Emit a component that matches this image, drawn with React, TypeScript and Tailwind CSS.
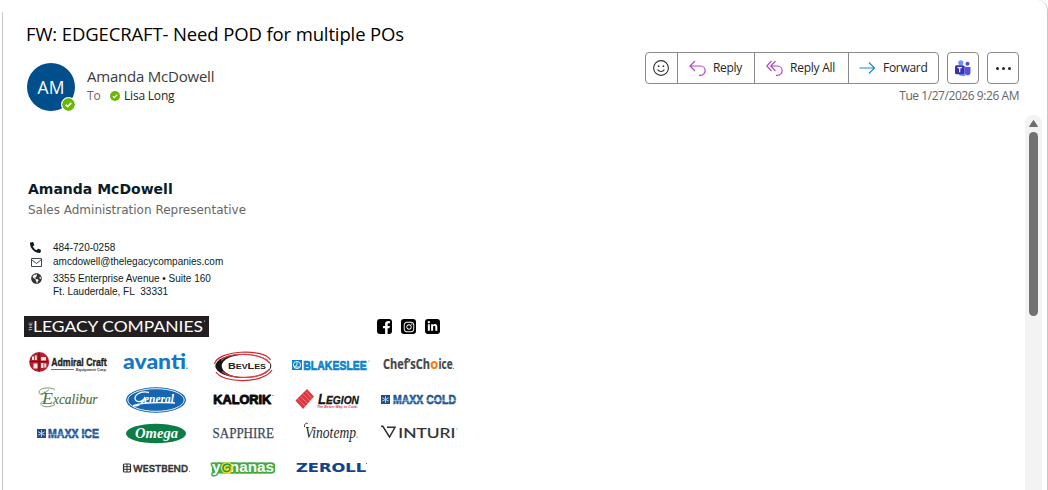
import React from 'react';
import { FaFacebookF, FaInstagram, FaLinkedinIn, FaPhoneAlt, FaGlobeAmericas } from 'react-icons/fa';

interface WordProps {
    x: number;
    y: number;
    w: number;
    size: number;
    fill: string;
    font?: string;
    weight?: number;
    italic?: boolean;
    heavy?: number;
    children: React.ReactNode;
}

// One stretched line of logo lettering; "heavy" thickens it with a stroke
function Word({ x, y, w, size, fill, font = 'Liberation Sans, sans-serif', weight = 400, italic, heavy = 0, children }: WordProps) {
    return (
        <text
            x={x}
            y={y}
            textLength={w}
            lengthAdjust="spacingAndGlyphs"
            fontSize={size}
            fontFamily={font}
            fontWeight={weight}
            fontStyle={italic ? 'italic' : 'normal'}
            fill={fill}
            stroke={heavy ? fill : 'none'}
            strokeWidth={heavy}
            strokeLinejoin="round"
        >
            {children}
        </text>
    );
}

function Logo({ className = '', label, children }: { className?: string; label: string; children: React.ReactNode }) {
    return (
        <svg viewBox="0 0 88 35" width="88" height="35" aria-label={label} className={`overflow-visible ${className}`}>
            {children}
        </svg>
    );
}

function Snowflake({ x, y }: { x: number; y: number }) {
    return (
        <g transform={`translate(${x} ${y})`}>
            <rect width="9" height="9" fill="#1d4f8c" />
            <path d="M4.5 1v7M1.2 2.8l6.6 3.4M1.2 6.2l6.6-3.4" stroke="#c9dcf0" strokeWidth="0.9" />
        </g>
    );
}

function PresenceBadge({ className }: { className: string }) {
    return (
        <svg viewBox="0 0 12 12" className={className}>
            <circle cx="6" cy="6" r="6" fill="#6bb700" />
            <path d="M3.4 6.2l1.8 1.8 3.4-3.5" fill="none" stroke="#fff" strokeWidth="1.5" />
        </svg>
    );
}

function BrandGrid() {
    return (
        <div className="grid w-[440px] grid-cols-5">
            <Logo label="Admiral Craft">
                <circle cx="15.2" cy="15" r="10" fill="#b51f2b" />
                <path d="M15 6v18M6 14.500h18" stroke="#6d0a14" strokeWidth="1.200" />
                <path d="M8 9.500h2v3.500H8zM10.800 8.500h2v4.500h-2zM17 10h5v3.500h-5zM9.500 16.500h4v5h-4zM17 16h2.500v5H17zM20.300 16.500h2v4h-2z" fill="#fff" opacity="0.9" />
                <Word x={27.2} y={19} w={55.500} size={11.500} weight={700} heavy={0.4} fill="#1e1e1e">Admiral Craft</Word>
                <path d="M27 22.500h23" stroke="#c8323c" strokeWidth="0.9" />
                <Word x={52} y={24.2} w={31} size={3.400} weight={700} fill="#333">Equipment Corp.</Word>
            </Logo>
            <Logo label="avanti">
                <Word x={11} y={22} w={63} size={21} weight={900} font="Lato, sans-serif" fill="#1478c8">avanti</Word>
                <circle cx="75" cy="21.200" r="0.900" fill="#5c9fd4" />
            </Logo>
            <Logo label="BevLes">
                <ellipse cx="43.300" cy="19" rx="28" ry="12" fill="#161616" />
                <ellipse cx="46" cy="19" rx="24.300" ry="11.500" fill="#fff" />
                <path d="M14.500 17C17 3.500 63 .500 70.500 13" fill="none" stroke="#d3262f" strokeWidth="1.200" />
                <path d="M16 25c7 11.500 47 12 56-2" fill="none" stroke="#d3262f" strokeWidth="1.200" />
                <path d="M21 13.500C29 5 60 5 69.500 16M22 24.500c9 8 37 8.500 47-2" fill="none" stroke="#dd3c44" strokeWidth="1.300" />
                <text x="28" y="22" textLength="38" lengthAdjust="spacingAndGlyphs" fontFamily="Liberation Sans, sans-serif" fontWeight="700" fill="#222" fontSize="7">
                    <tspan fontSize="8.500">B</tspan>EV<tspan fontSize="8.500">L</tspan>ES
                </text>
            </Logo>
            <Logo label="Blakeslee">
                <rect x="4" y="13" width="10" height="10" fill="#0a84cc" />
                <circle cx="9" cy="18" r="3.600" fill="none" stroke="#fff" strokeWidth="0.900" />
                <path d="M9 14v4l-3 2h6" fill="none" stroke="#fff" strokeWidth="0.900" />
                <Word x={15.300} y={22.800} w={63.500} size={13.500} weight={700} heavy={0.700} fill="#0a84cc">BLAKESLEE</Word>
                <circle cx="81" cy="14" r="0.600" fill="#0a84cc" />
            </Logo>
            <Logo label="Chef's Choice">
                <Word x={7} y={22} w={47} size={13.500} weight={700} font="Open Sans, sans-serif" heavy={0.200} fill="#47474a">Chef’sCh</Word>
                <Word x={54.200} y={22} w={8} size={13.500} weight={700} font="Open Sans, sans-serif" heavy={0.200} fill="#f08119">o</Word>
                <Word x={62.500} y={22} w={14} size={13.500} weight={700} font="Open Sans, sans-serif" heavy={0.200} fill="#47474a">ice</Word>
                <circle cx="77.500" cy="21.500" r="0.600" fill="#777" />
            </Logo>

            <Logo label="Excalibur">
                <Word x={29} y={21.500} w={44.500} size={14} italic font="Liberation Serif, serif" heavy={0.150} fill="#4b7042">xcalibur</Word>
                <Word x={18} y={21.500} w={11} size={17} italic font="Liberation Serif, serif" fill="#4b7042">E</Word>
                <path d="M31 7.500c-6-3-16-1.500-16 2.500 0 3.500 6 3 5.500-.5M25 7.500c-3 3-5 4-8 4M31 22.500c-5 3-12 3-14 0-1-2 2-4 4-3" fill="none" stroke="#5d8054" strokeWidth="0.800" />
            </Logo>
            <Logo label="General">
                <ellipse cx="44" cy="18" rx="30" ry="12.800" fill="#1466b2" />
                <ellipse cx="44" cy="18" rx="28.200" ry="11.300" fill="none" stroke="#fff" strokeWidth="0.900" />
                <Word x={32} y={20.500} w={30} size={12} weight={700} italic font="Liberation Serif, serif" fill="#fff">eneral</Word>
                <path d="M37 10.500c-9-2.500-17 4-13 8 3 2.500 8 .500 9-3.500-1 5-5 9-12 9M21 23.500c12-4 28-3 42-2.500" fill="none" stroke="#fff" strokeWidth="1.300" />
            </Logo>
            <Logo label="Kalorik">
                <Word x={13.300} y={21.800} w={58} size={12.500} weight={700} heavy={0.900} fill="#080808">KALORIK</Word>
                <circle cx="73" cy="13.500" r="0.500" fill="#222" />
            </Logo>
            <Logo label="Legion">
                <path d="M7.500 18.500L19 7l7 7.500L15 27z" fill="#dc3940" />
                <path d="M10 17l7 7M12.500 14.500l7 7M15 12l7 7M17.500 9.500l6.500 7" stroke="#f19a9c" strokeWidth="0.600" />
                <Word x={30} y={21.800} w={8} size={14} weight={700} italic heavy={0.300} fill="#161616">L</Word>
                <Word x={38} y={21.800} w={33} size={11} weight={700} italic heavy={0.300} fill="#161616">EGION</Word>
                <Word x={29} y={25.800} w={41} size={3.600} weight={700} italic fill="#e03a42">The Better Way to Cook.</Word>
            </Logo>
            <Logo label="Maxx Cold">
                <Snowflake x={5} y={13} />
                <Word x={17} y={21.800} w={63} size={12} weight={700} heavy={0.600} fill="url(#frost)">MAXX COLD</Word>
            </Logo>

            <Logo label="Maxx Ice">
                <defs>
                    <linearGradient id="frost" x1="0" y1="0" x2="0" y2="1">
                        <stop offset="0.200" stopColor="#1c4f8a" />
                        <stop offset="0.500" stopColor="#2f6aa5" />
                        <stop offset="0.560" stopColor="#86b1d6" />
                        <stop offset="0.620" stopColor="#2b66a2" />
                        <stop offset="0.900" stopColor="#17457c" />
                    </linearGradient>
                </defs>
                <Snowflake x={13} y={12} />
                <Word x={24} y={20.800} w={51} size={12} weight={700} heavy={0.600} fill="url(#frost)">MAXX ICE</Word>
            </Logo>
            <Logo label="Omega">
                <ellipse cx="44" cy="16.500" rx="30" ry="9.800" fill="#0c7d45" />
                <Word x={23} y={21} w={43} size={14.500} weight={700} italic font="Liberation Serif, serif" fill="#fff">Omega</Word>
            </Logo>
            <Logo label="Sapphire">
                <Word x={12.500} y={20.500} w={61.500} size={15} font="Liberation Serif, serif" heavy={0.250} fill="#3a475c">SAPPHIRE</Word>
            </Logo>
            <Logo label="Vinotemp">
                <Word x={17} y={20.500} w={51} size={17.500} italic font="Liberation Serif, serif" fill="#26262a">Vinotemp</Word>
                <path d="M16.500 10c-.500-3 2-5 3.500-3" fill="none" stroke="#26262a" strokeWidth="0.900" />
                <circle cx="69" cy="20" r="0.500" fill="#333" />
            </Logo>
            <Logo label="Vinturi">
                <path d="M5 9.300h1.800l6.700 10.700 5.500-9.700h-8" fill="none" stroke="#2c2f33" strokeWidth="1.500" />
                <Word x={22.300} y={20.700} w={57} size={13} font="Lato, sans-serif" heavy={0.200} fill="#2c2f33">INTURI</Word>
                <circle cx="81" cy="12" r="0.500" fill="#555" />
            </Logo>

            <Logo label="West Bend" className="col-start-2">
                <rect x="11.500" y="12" width="7" height="8" rx="1" fill="none" stroke="#333" strokeWidth="1.200" />
                <path d="M15 12v8M11.500 14.700h7M11.500 17.300h7" stroke="#333" strokeWidth="1" />
                <Word x={21} y={19.700} w={55} size={9.500} font="Inter, sans-serif" weight={500} heavy={0.450} fill="#333">WESTBEND</Word>
                <circle cx="77.500" cy="19.300" r="0.500" fill="#444" />
            </Logo>
            <Logo label="yonanas">
                <rect x="12" y="10.500" width="63" height="11" rx="3" fill="#3faa3f" />
                <g fill="#fff" stroke="#3faa3f" strokeWidth="3" strokeLinejoin="round" style={{ paintOrder: 'stroke' }}>
                    <text x="12" y="20" textLength="62" lengthAdjust="spacingAndGlyphs" fontSize="14.500" fontWeight="700" fontFamily="Liberation Sans, sans-serif">yonanas</text>
                </g>
                <circle cx="27" cy="16" r="6" fill="#e9dc2c" />
                <path d="M31 14.500c-2-4-8-2.500-8 1.500 0 4.500 7 4.800 7 .8 0-2.500-3.500-2.500-4-.3" fill="none" stroke="#2d9440" strokeWidth="1.500" />
            </Logo>
            <Logo label="Zeroll">
                <Word x={8} y={19.600} w={70} size={11.800} weight={700} font="DejaVu Sans, sans-serif" heavy={0.150} fill="#12428a">ZEROLL</Word>
                <circle cx="78.500" cy="11.500" r="0.500" fill="#12428a" />
            </Logo>
        </div>
    );
}

function MessageActions() {
    return (
        <div className="flex gap-2 font-['Open_Sans',sans-serif] text-[12px] text-[#242424]">
            <div className="flex h-8 w-[294px] divide-x divide-[#8a8a8a] rounded-[4px] border border-[#8a8a8a]">
                <button className="flex w-[32px] items-center justify-center pr-px">
                    <svg viewBox="0 0 16 16" className="size-4" fill="none" stroke="#333" strokeWidth="1.100">
                        <circle cx="8" cy="8" r="7.400" />
                        <path d="M4.600 9.600c1.500 2.600 5.300 2.600 6.800 0" />
                        <circle cx="5.600" cy="6.200" r="0.900" fill="#333" stroke="none" />
                        <circle cx="10.400" cy="6.200" r="0.900" fill="#333" stroke="none" />
                    </svg>
                </button>
                <button className="flex w-[77px] items-center gap-[7px] whitespace-nowrap pl-[11px] tracking-[-0.3px]">
                    <svg viewBox="0 0 17 16" className="h-4 w-[17px] shrink-0" fill="none" stroke="#b146c2" strokeWidth="1.200">
                        <path d="M6 1L1 6l5 5M1 6h10.500a4.600 4.600 0 0 1 0 9.300H10" />
                    </svg>
                    Reply
                </button>
                <button className="flex w-[94px] items-center gap-[7px] whitespace-nowrap pl-[11px] tracking-[-0.25px]">
                    <svg viewBox="0 0 17 16" className="h-4 w-[17px] shrink-0" fill="none" stroke="#b146c2" strokeWidth="1.200">
                        <path d="M5.500 1L.8 6l4.700 5M9.500 1L4.800 6l4.700 5M5 6h6.500a4.600 4.600 0 0 1 0 9.300H10" />
                    </svg>
                    Reply All
                </button>
                <button className="flex flex-1 items-center gap-[7px] whitespace-nowrap pl-[10px] tracking-[-0.3px]">
                    <svg viewBox="0 0 17 16" className="h-4 w-[17px] shrink-0" fill="none" stroke="#1e8bcd" strokeWidth="1.200">
                        <path d="M.5 8h15M10 2.500L15.500 8 10 13.500" />
                    </svg>
                    Forward
                </button>
            </div>
            <button className="flex size-8 items-center justify-center rounded-[4px] border border-[#8a8a8a]">
                <svg viewBox="0 0 16 16" className="size-4">
                    <circle cx="5.800" cy="2.800" r="2.600" fill="#6f93f8" />
                    <circle cx="12.500" cy="3.800" r="2" fill="#5049d8" />
                    <path d="M3.500 6h7v10H7a3.500 3.500 0 0 1-3.500-3.500z" fill="#6f93f8" />
                    <path d="M10 7h5.500v5.500a2.750 2.750 0 0 1-5.500 0z" fill="#5a4fd9" />
                    <rect x="0" y="5.200" width="9.300" height="9" rx="1.500" fill="#3a30b0" />
                    <path d="M2.500 7.700h4.400M4.700 7.700v4.500" stroke="#fff" strokeWidth="1.200" />
                </svg>
            </button>
            <button className="flex size-8 items-center justify-center gap-[3px] rounded-[4px] border border-[#8a8a8a]">
                <span className="size-[3px] rounded-full bg-[#242424]" />
                <span className="size-[3px] rounded-full bg-[#242424]" />
                <span className="size-[3px] rounded-full bg-[#242424]" />
            </button>
        </div>
    );
}

function MessageHeader() {
    return (
        <header className="h-[115px] pl-6 pr-[28px] pt-[21px] font-['Open_Sans',sans-serif]">
            <h1 className="-ml-px h-[27px] text-[18.5px] leading-[26px] tracking-[-0.13px] text-black">FW: EDGECRAFT- Need POD for multiple POs</h1>
            <div className="flex justify-between">
                <div className="flex pt-[15px]">
                    <div className="relative flex size-12 items-center justify-center rounded-full bg-[#004e8c] text-[17.5px] text-white">
                        AM
                        <PresenceBadge className="absolute -bottom-[1px] -right-[1px] size-[15px] rounded-full border-[1.5px] border-white bg-white" />
                    </div>
                    <div className="pl-3 pt-[3px]">
                        <div className="h-[21px] text-[15px] leading-5 tracking-[-0.22px] text-[#3b3b3b]">Amanda McDowell</div>
                        <div className="flex h-[18px] items-center text-[12px] leading-[18px] tracking-[-0.2px] text-[#242424]">
                            <span className="w-[23px] text-[#666]">To</span>
                            <PresenceBadge className="mr-1 size-[10px]" />
                            <span>Lisa Long</span>
                        </div>
                    </div>
                </div>
                <div className="flex flex-col items-end pt-1">
                    <MessageActions />
                    <div className="mt-[3px] text-[12px] leading-[18px] tracking-[-0.44px] text-[#666]">Tue 1/27/2026 9:26 AM</div>
                </div>
            </div>
        </header>
    );
}

function MessageBody() {
    return (
        <div className="flex-1 pl-[21px] pt-[64px]">
            <div className="pl-1">
                <div className="h-5 font-['DejaVu_Sans',sans-serif] text-[14px] font-bold leading-5 text-[#0b1c24]">Amanda McDowell</div>
                <div className="h-5 font-['DejaVu_Sans',sans-serif] text-[12px] leading-[23px] text-[#666]">Sales Administration Representative</div>
                <div className="mt-[21px] grid grid-cols-[25px_1fr] font-['Liberation_Sans',Arial,sans-serif] text-[10px] leading-[13px] text-[#0b1c24]">
                    <span className="h-[15px] pl-[2px] pt-[2px]"><FaPhoneAlt className="size-[11px]" /></span>
                    <span className="pt-px">484-720-0258</span>
                    <span className="h-[17px] pl-[3px] pt-[3px]">
                        <svg viewBox="0 0 11 9" className="h-[9px] w-[11px]" fill="none" stroke="#3c4649" strokeWidth="1">
                            <path d="M.5.5h10v8H.5zM.5 1.500l5 4 5-4" />
                        </svg>
                    </span>
                    <span className="whitespace-nowrap">amcdowell@thelegacycompanies.com</span>
                    <span className="pl-[3px] pt-px"><FaGlobeAmericas className="size-[11px] text-[#333]" /></span>
                    <span>3355 Enterprise Avenue • Suite 160<br />Ft. Lauderdale, FL&nbsp; 33331</span>
                </div>
            </div>
            <div className="mt-[18px] flex h-[21px]">
                <svg viewBox="0 0 185 21" width="185" height="21">
                    <rect width="185" height="21" fill="#231f20" />
                    <text transform="translate(8 15) rotate(-90)" fontSize="4" textLength="9" fontFamily="Liberation Sans, sans-serif" fill="#fff">THE</text>
                    <Word x={9} y={15.800} w={170} size={15} font="Lato, sans-serif" fill="#fff">LEGACY COMPANIES</Word>
                    <circle cx="180.500" cy="5" r="0.500" fill="#fff" />
                </svg>
                <div className="flex gap-[9px] pl-[168px] pt-[3px] text-white">
                    <span className="flex size-[15px] items-end justify-center rounded-[3px] bg-black pl-1"><FaFacebookF className="size-[13px]" /></span>
                    <span className="flex size-[15px] items-center justify-center rounded-[3px] bg-black"><FaInstagram className="size-[12px]" /></span>
                    <span className="flex size-[15px] items-center justify-center rounded-[3px] bg-black"><FaLinkedinIn className="size-[11px]" /></span>
                </div>
            </div>
            <div className="pt-[10px]">
                <BrandGrid />
            </div>
        </div>
    );
}

function Scrollbar() {
    return (
        <div className="mr-[5px] flex w-[17px] flex-col items-center rounded-t-[8px] bg-[#f3f3f3] pt-[5px]">
            <svg viewBox="0 0 9 7" className="h-[7px] w-[9px]">
                <path d="M4.500 .5L8.500 6.500H.5z" fill="#6e6e6e" stroke="#6e6e6e" strokeLinejoin="round" />
            </svg>
            <div className="mt-[5px] h-[184px] w-[9px] rounded-full bg-[#717171]" />
        </div>
    );
}

export default function App() {
    return (
        <div className="flex h-[490px] w-[1048px] overflow-hidden rounded-tr-[10px] border-r border-[#c8c8c8] bg-white">
            <div className="ml-[2px] mt-3 w-px bg-[#c8c8c8]" />
            <div className="flex min-w-0 flex-1 flex-col">
                <MessageHeader />
                <div className="flex flex-1">
                    <MessageBody />
                    <Scrollbar />
                </div>
            </div>
        </div>
    );
}
